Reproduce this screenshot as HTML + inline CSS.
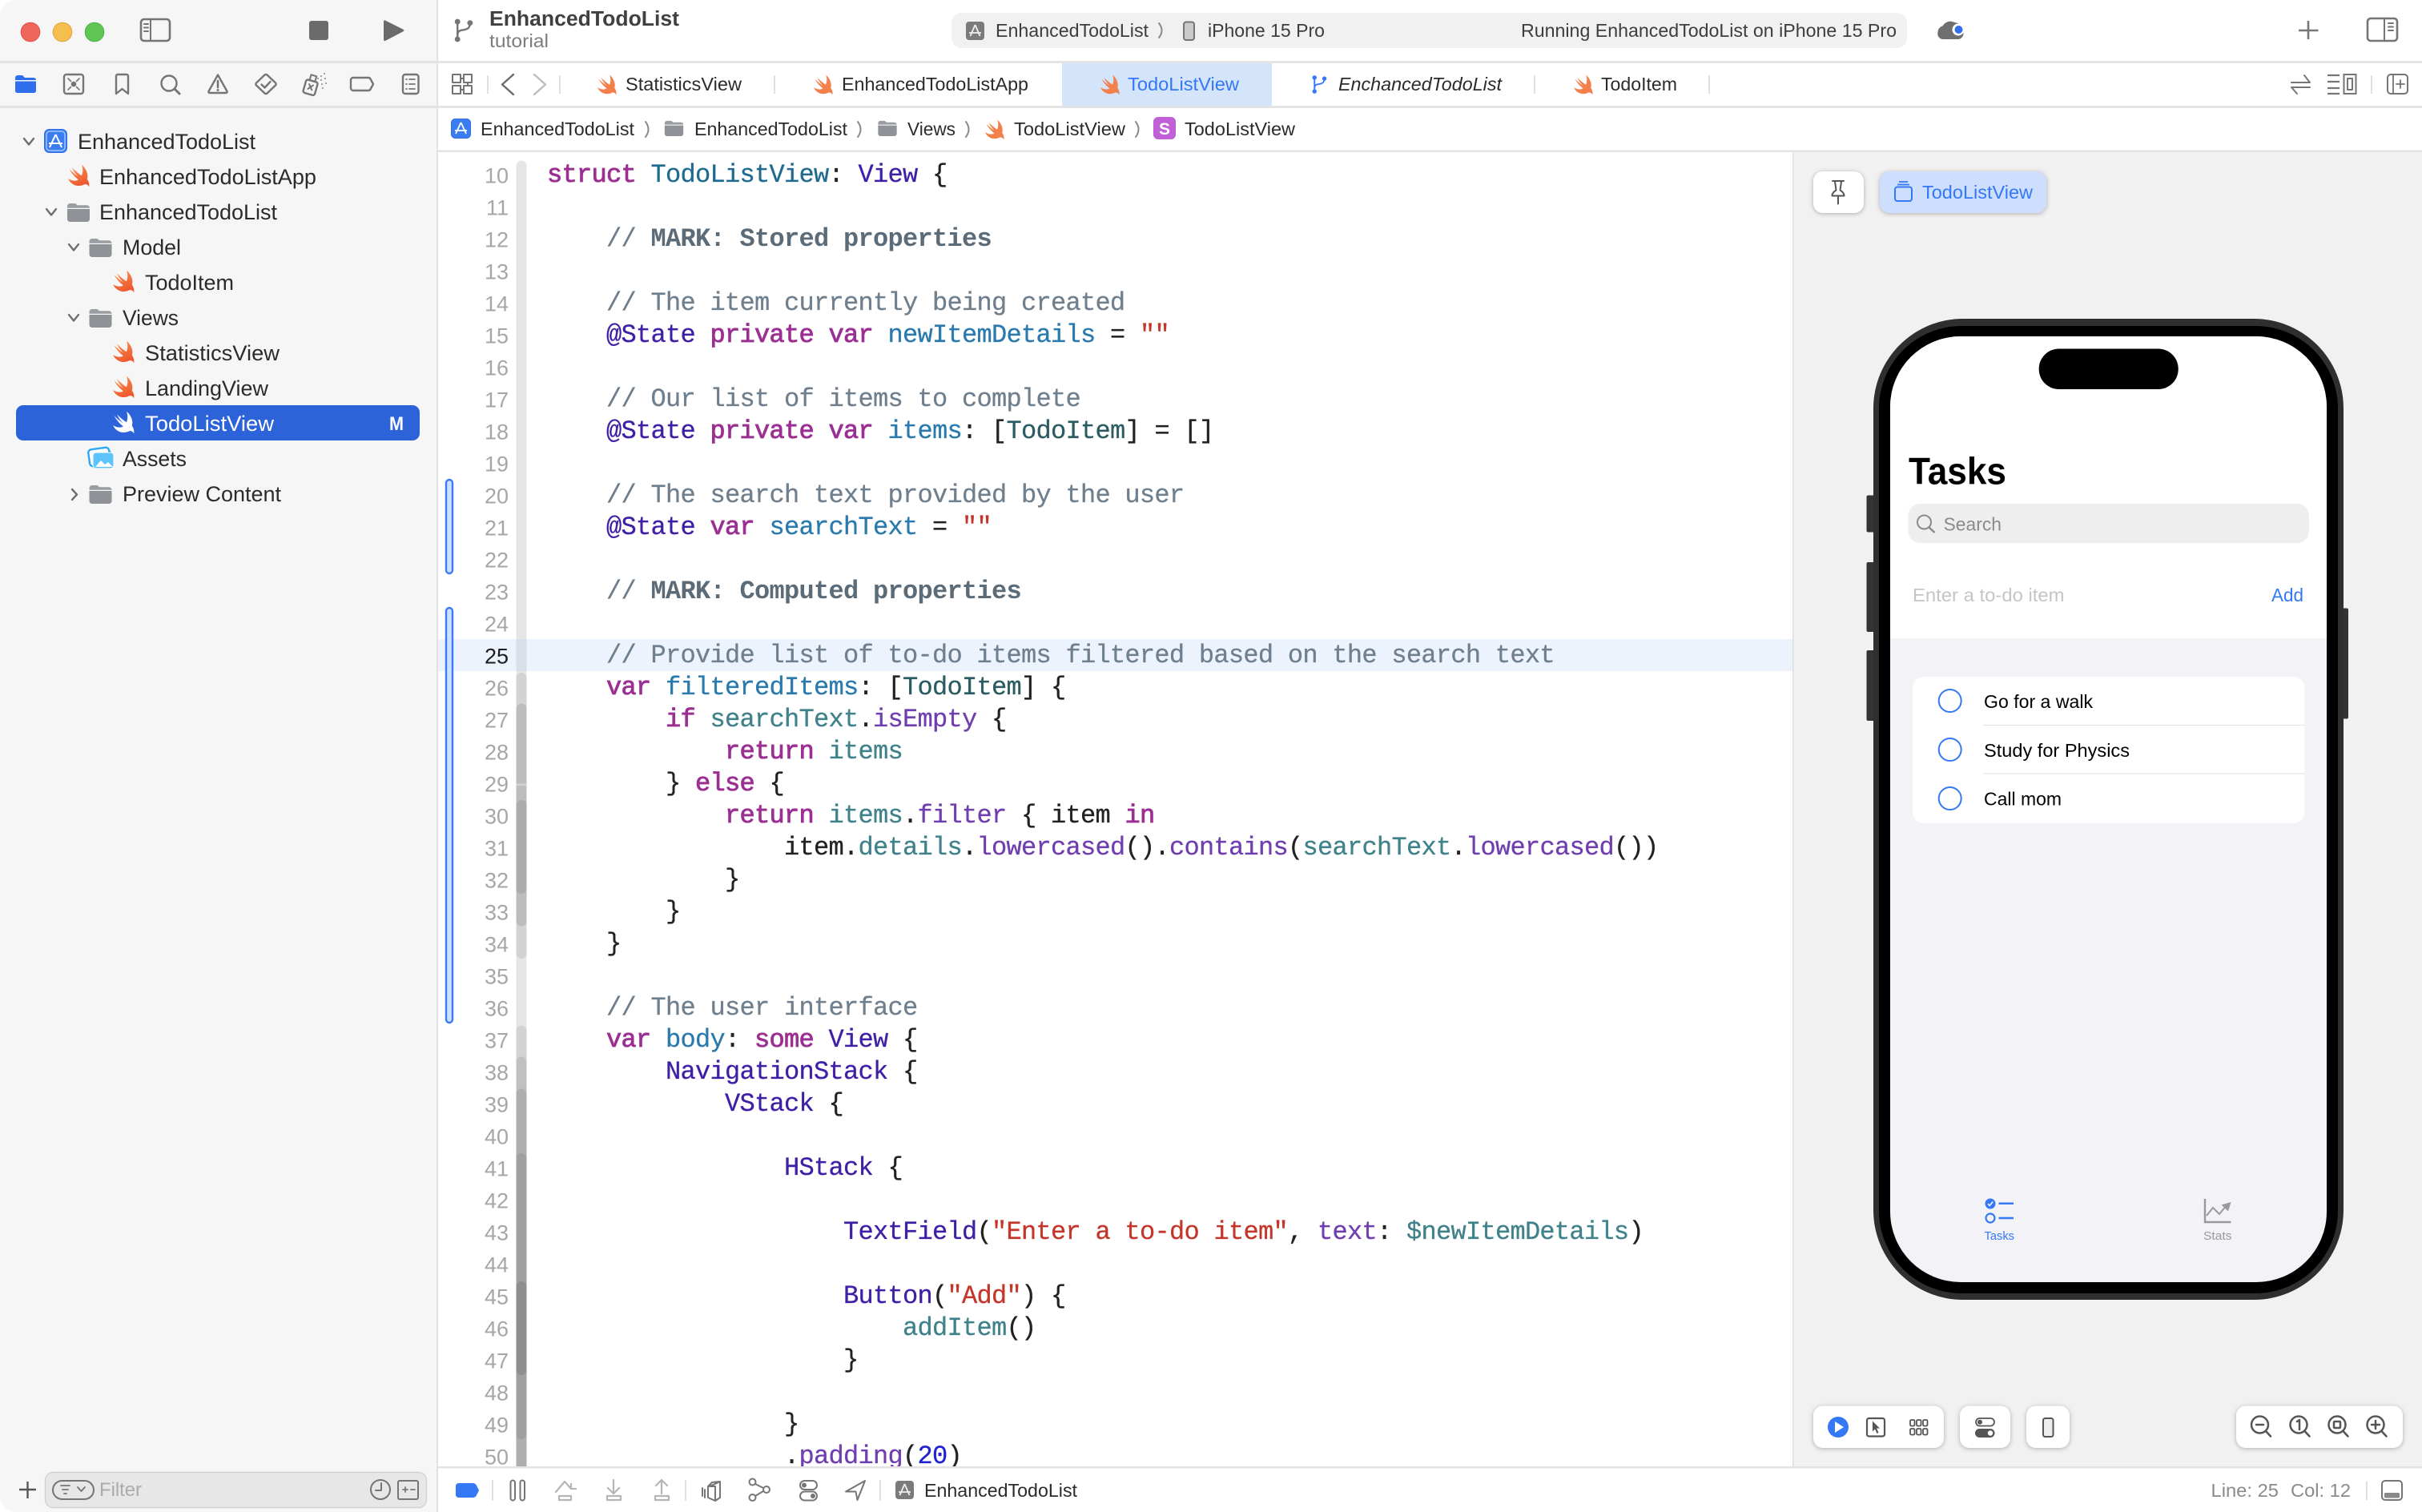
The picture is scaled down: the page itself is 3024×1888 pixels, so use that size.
<!DOCTYPE html>
<html><head><meta charset="utf-8"><title>Xcode</title>
<style>
html,body{margin:0;padding:0;background:#fff;width:3024px;height:1888px;overflow:hidden}
svg{display:block}
text{font-family:"Liberation Sans",sans-serif;white-space:pre}
.c text{font-family:"Liberation Mono",monospace;font-size:32px;letter-spacing:-.705px;fill:#222;stroke:#222;stroke-width:.3px;white-space:pre}
.k{fill:#9b2f92;stroke:#9b2f92;stroke-width:.8px}.t{fill:#6f7f8d;stroke:#6f7f8d}.m{fill:#5b6b78;stroke:#5b6b78;font-weight:bold;stroke-width:0}.d{fill:#1f6b90;stroke:#1f6b90}.v{fill:#2a7aad;stroke:#2a7aad}.s{fill:#3f1fa5;stroke:#3f1fa5}.p{fill:#2b5c62;stroke:#2b5c62}.r{fill:#40828a;stroke:#40828a}.f{fill:#6f3fb0;stroke:#6f3fb0}.q{fill:#c4352a;stroke:#c4352a}.n{fill:#2222d0;stroke:#2222d0}
.ln text{font-size:27px;fill:#a6a6a6;text-anchor:end}
.nav text,.ui{font-size:26.4px;fill:#2b2b2b}
.tb{font-size:23.5px;fill:#2b2b2b}
.ic{fill:none;stroke:#757575;stroke-width:2.4;stroke-linecap:round;stroke-linejoin:round}
.dk{fill:none;stroke:#555;stroke-width:2.5;stroke-linecap:round;stroke-linejoin:round}
.lt{fill:none;stroke:#b5b5b5;stroke-width:2.2;stroke-linecap:round;stroke-linejoin:round}
.sh{filter:drop-shadow(0 1px 3px rgba(0,0,0,.28))}
.ch{fill:none;stroke:#8a8a8a;stroke-width:2;stroke-linecap:round;stroke-linejoin:round}
.nc{fill:none;stroke:#6b6b6b;stroke-width:2.4;stroke-linecap:round;stroke-linejoin:round}
</style></head><body>
<svg xmlns="http://www.w3.org/2000/svg" width="3024" height="1888" viewBox="0 0 3024 1888">
<defs>
<linearGradient id="sg" x1="0" y1="0" x2="0.4" y2="1"><stop offset="0" stop-color="#f8934f"/><stop offset="1" stop-color="#ee5a2f"/></linearGradient>
<symbol id="swiftpath" viewBox="0 0 24 24"><path d="M15 .5C20 5 22 11 20.500 15.500C22 17.500 23 20 22.500 23.500C21.500 21.300 19.500 20.300 17.500 21C13 23.300 7.500 22.800 3.500 18.800C2.500 17.800 1.500 16.500 1 15C5 17.500 9 17.600 11.500 16C8 13.500 4.500 9.500 2 5C5 8 8.500 11 11.500 13C9 10.500 6.500 7 5 3.500C8 6.800 12 10 14.800 11.800C16.300 8.500 16.300 4.500 15 .5Z"/></symbol>
<symbol id="fold" viewBox="0 0 28 24"><path d="M0 4.500a3.500 3.500 0 0 1 3.500-3.500h6.500l2.500 2.300h12a3.500 3.500 0 0 1 3.500 3.200v.3H0Z" fill="#9a9da1"/><path d="M0 8h28v12.500a3.500 3.500 0 0 1-3.500 3.500H3.500A3.500 3.500 0 0 1 0 20.500Z" fill="#8f9297"/></symbol>
<symbol id="branch" viewBox="0 0 24 28"><path d="M5 4V24M5 20c0-7 5-6 9-7 4-1 6-3 6-8" fill="none" stroke="currentColor" stroke-width="2.300"/><circle cx="5" cy="3.500" r="3.300" fill="currentColor"/><circle cx="20" cy="5" r="3.300" fill="currentColor"/><circle cx="5" cy="24.500" r="3.300" fill="currentColor"/></symbol>
</defs>

<!-- sidebar -->
<path d="M22 0H546V1888H22Q0 1888 0 1866V22Q0 0 22 0Z" fill="#f6f6f6"/>
<rect x="545" y="0" width="2" height="1888" fill="#e2e2e2"/>
<rect x="0" y="76" width="3024" height="3" fill="#e3e3e3"/>
<rect x="0" y="132" width="3024" height="3" fill="#e3e3e3"/>

<!-- traffic lights -->
<circle cx="38" cy="40" r="11.800" fill="#f1665c" stroke="#dd5148" stroke-width="1"/>
<circle cx="78" cy="40" r="11.800" fill="#f6be4f" stroke="#dea53c" stroke-width="1"/>
<circle cx="118" cy="40" r="11.800" fill="#5fc655" stroke="#4eb045" stroke-width="1"/>
<rect x="176" y="24" width="36" height="27" rx="4" class="ic" style="stroke-width:2.600"/>
<path d="M188 24V51M180 30h5M180 34.500h5M180 39h5" class="ic" style="stroke-width:2"/>
<rect x="386" y="26" width="24" height="24" rx="3" fill="#6b6b6b"/>
<path d="M479 27Q479 24 482 26L503 36.500Q506 38 503 39.500L482 50.500Q479 52 479 49Z" fill="#6b6b6b"/>

<!-- nav selector -->
<path d="M19 97a3 3 0 0 1 3-3h6l3 3h11a3 3 0 0 1 3 3v0H19Z" fill="#2f6fed"/>
<path d="M19 101.500h26v12a2.500 2.500 0 0 1-2.500 2.500h-21a2.500 2.500 0 0 1-2.500-2.500Z" fill="#2f6fed"/>
<rect x="80" y="93" width="24" height="24" rx="3" class="ic"/>
<circle cx="92" cy="105" r="3.300" fill="#757575"/>
<path d="M85 98l3.500 3.500M99 98l-3.500 3.500M85 112l3.500-3.500M99 112l-3.500-3.500" class="ic" style="stroke-width:1.600"/>
<path d="M145 95a2 2 0 0 1 2-2h11a2 2 0 0 1 2 2v22l-7.500-6-7.500 6Z" class="ic"/>
<circle cx="211" cy="104" r="9.500" class="ic"/><path d="M218 111l6 6" class="ic" style="stroke-width:3"/>
<path d="M272 93.500L260.500 114a1.500 1.500 0 0 0 1.300 2h20.400a1.500 1.500 0 0 0 1.300-2Z" class="ic"/>
<path d="M272 101v8" class="ic" style="stroke-width:2.600"/><circle cx="272" cy="112.500" r="1.500" fill="#757575"/>
<path d="M330.500 93.500a2.500 2.500 0 0 1 3 0L344 103.500a2 2 0 0 1 0 3L333.500 116.500a2.500 2.500 0 0 1-3 0L320 106.500a2 2 0 0 1 0-3Z" class="ic"/>
<path d="M326.500 105.500l4 4 7-7.500" class="ic"/>
<g transform="rotate(16 389 106)"><rect x="381" y="101" width="15" height="17" rx="2.500" class="ic"/><rect x="385" y="94" width="7" height="7" class="ic" style="stroke-width:2"/><path d="M386 106l5 6M391 106l-5 6" class="ic" style="stroke-width:2"/></g>
<g fill="#8a8a8a"><circle cx="397" cy="98" r="1"/><circle cx="401" cy="95" r="1"/><circle cx="405" cy="92" r="1"/><circle cx="401" cy="100" r="1"/><circle cx="406" cy="98" r="1"/><circle cx="402" cy="105" r="1"/><circle cx="407" cy="104" r="1"/><circle cx="403" cy="110" r="1"/></g>
<path d="M441 97h19a3 3 0 0 1 2.500 1.500L466 105l-3.500 6.500a3 3 0 0 1-2.500 1.500h-19a3 3 0 0 1-3-3V100a3 3 0 0 1 3-3Z" class="ic"/>
<rect x="503" y="93" width="19.500" height="24" rx="3" class="ic"/>
<path d="M507 99h1M511 99h7M507 105h1M511 105h7M507 111h1M511 111h7" class="ic" style="stroke-width:1.800"/>

<!-- navigator tree -->
<rect x="20" y="506" width="504" height="44" rx="9" fill="#2c63d9"/>
<g class="ch" style="stroke:#6e6e6e;stroke-width:2.400;fill:none">
<path d="M30 173l6 7.500 6-7.500"/><path d="M58 261l6 7.500 6-7.500"/><path d="M86 305l6 7.500 6-7.500"/><path d="M86 393l6 7.500 6-7.500"/><path d="M90 611l6 6.500-6 6.500"/>
</g>
<rect x="55.500" y="161.500" width="28" height="29" rx="6" fill="#3a7cf2" stroke="#2d6fe8" stroke-width="1"/>
<rect x="58" y="164" width="23" height="24" rx="4" fill="none" stroke="#bcd4fb" stroke-width="1.200"/>
<path d="M69.500 168L62 184M69.500 168L77 184M61 179h17" stroke="#fff" stroke-width="2" fill="none"/>
<g fill="url(#sg)">
<use href="#swiftpath" x="84" y="205" width="29" height="29"/>
<use href="#swiftpath" x="140" y="337" width="29" height="29"/>
<use href="#swiftpath" x="140" y="425" width="29" height="29"/>
<use href="#swiftpath" x="140" y="469" width="29" height="29"/>
</g>
<use href="#swiftpath" x="140" y="513" width="29" height="29" fill="#fff"/>
<use href="#fold" x="84" y="253" width="28" height="24"/>
<use href="#fold" x="111" y="297" width="29" height="24"/>
<use href="#fold" x="111" y="385" width="29" height="24"/>
<use href="#fold" x="111" y="605" width="29" height="24"/>
<rect x="114" y="563" width="26" height="21" rx="4" fill="#2ba6f4" transform="rotate(-8 127 573)"/>
<rect x="111" y="560" width="26" height="21" rx="4" fill="#fff" stroke="#2ba6f4" stroke-width="2.400" transform="rotate(-8 124 570)"/>
<rect x="116" y="565" width="26" height="20" rx="4" fill="#5cc3fb" stroke="#fff" stroke-width="1"/>
<path d="M119 583l7-8 5 5 4-3 6 6Z" fill="#fff"/>
<g class="nav">
<text x="97" y="186" textLength="222" lengthAdjust="spacingAndGlyphs">EnhancedTodoList</text>
<text x="124" y="230" textLength="271" lengthAdjust="spacingAndGlyphs">EnhancedTodoListApp</text>
<text x="124" y="274" textLength="222" lengthAdjust="spacingAndGlyphs">EnhancedTodoList</text>
<text x="153" y="318" textLength="73" lengthAdjust="spacingAndGlyphs">Model</text>
<text x="181" y="362" textLength="111" lengthAdjust="spacingAndGlyphs">TodoItem</text>
<text x="153" y="406" textLength="70" lengthAdjust="spacingAndGlyphs">Views</text>
<text x="181" y="450" textLength="168" lengthAdjust="spacingAndGlyphs">StatisticsView</text>
<text x="181" y="494" textLength="154" lengthAdjust="spacingAndGlyphs">LandingView</text>
<text x="181" y="538" textLength="161" lengthAdjust="spacingAndGlyphs" style="fill:#fff">TodoListView</text>
<text x="486" y="537" textLength="18" lengthAdjust="spacingAndGlyphs" style="fill:#fff;font-weight:bold;font-size:24px">M</text>
<text x="153" y="582" textLength="80" lengthAdjust="spacingAndGlyphs">Assets</text>
<text x="153" y="626" textLength="198" lengthAdjust="spacingAndGlyphs">Preview Content</text>
</g>

<!-- sidebar filter -->
<path d="M24 1860h21M34.500 1850v21" stroke="#555" stroke-width="2.400" fill="none"/>
<rect x="56.500" y="1838.500" width="476" height="44" rx="10" fill="#e7e7e7" stroke="#d2d2d2" stroke-width="1.400"/>
<rect x="66" y="1849" width="51" height="23" rx="11.500" class="ic" style="stroke-width:2"/>
<path d="M76 1855h11M78 1860h7M80 1865h3M97 1857l4.500 5 4.500-5" class="ic" style="stroke-width:1.800"/>
<text x="124" y="1868" font-size="24" fill="#ababab" textLength="53" lengthAdjust="spacingAndGlyphs">Filter</text>
<circle cx="475" cy="1860" r="12" class="ic" style="stroke-width:2"/><path d="M476 1852v9h-7" class="ic" style="stroke-width:2"/>
<rect x="497" y="1849" width="25" height="23" rx="2" class="ic" style="stroke-width:2"/>
<path d="M503 1860h6M506 1857v6M513 1860h5" class="ic" style="stroke-width:1.800"/>

<!-- toolbar -->
<use href="#branch" x="566" y="23" width="25" height="30" color="#757575"/>
<text x="611" y="32" font-size="26.300" font-weight="bold" fill="#404040" textLength="237" lengthAdjust="spacingAndGlyphs">EnhancedTodoList</text>
<text x="611" y="59" font-size="23" fill="#7d7d7d" textLength="74" lengthAdjust="spacingAndGlyphs">tutorial</text>

<rect x="1188" y="16" width="1193" height="44" rx="13" fill="#f1f1f1"/>
<rect x="1206" y="27" width="23" height="23" rx="4" fill="#7b7b7b"/>
<path d="M1217.500 31L1211.500 45M1217.500 31L1223.500 45M1210 41h15" stroke="#eee" stroke-width="1.800" fill="none"/>
<text x="1243" y="46" class="tb" style="fill:#3d3d3d" textLength="191" lengthAdjust="spacingAndGlyphs">EnhancedTodoList</text>
<path d="M1447 29q7 9 0 18" class="ch"/>
<rect x="1478" y="27.500" width="13" height="22.500" rx="3" fill="#c9c9c9" stroke="#757575" stroke-width="2"/>
<text x="1508" y="46" class="tb" style="fill:#3d3d3d" textLength="146" lengthAdjust="spacingAndGlyphs">iPhone 15 Pro</text>
<text x="1899" y="46" class="tb" style="fill:#3d3d3d" textLength="469" lengthAdjust="spacingAndGlyphs">Running EnhancedTodoList on iPhone 15 Pro</text>
<path d="M2426 49a7 7 0 0 1-6.500-9 8 8 0 0 1 6-7.500 11 11 0 0 1 15-4.500 12 12 0 0 1 11 13 7.500 7.500 0 0 1-6 8Z" fill="#6f6f6f"/>
<circle cx="2445" cy="37" r="7.500" fill="#fff"/><circle cx="2445.500" cy="37" r="5" fill="#2f6fed"/>
<path d="M2870 38h24.500M2882 26v23" stroke="#777" stroke-width="2.600" fill="none"/>
<rect x="2956" y="23" width="37" height="28" rx="4" class="ic" style="stroke-width:2.600"/>
<path d="M2977 23v28M2982 29h6M2982 33.500h6M2982 38h6" class="ic" style="stroke-width:2"/>

<!-- tab bar -->
<g class="ic" style="stroke-width:2">
<rect x="565" y="93" width="10" height="10"/><rect x="579" y="93" width="10" height="10"/><rect x="565" y="107" width="10" height="10"/><rect x="579" y="107" width="10" height="10"/>
<path d="M575 98h4M575 112h4M584 103v4"/>
</g>
<path d="M609 94v23M699 94v23M967 94v23M1916 94v23M2134 94v23M2961 94v23" stroke="#dedede" stroke-width="1.800" fill="none"/>
<path d="M641 93l-14 12.500 14 12.500" class="nc"/>
<path d="M667 93l14 12.500-14 12.500" class="nc" style="stroke:#bdbdbd"/>
<rect x="1326" y="78.500" width="262" height="53.500" fill="#d3e4fb"/>
<g fill="#f37f4b">
<use href="#swiftpath" x="745" y="93" width="26" height="26"/>
<use href="#swiftpath" x="1015" y="93" width="26" height="26"/>
<use href="#swiftpath" x="1373" y="93" width="26" height="26"/>
<use href="#swiftpath" x="1964" y="93" width="26" height="26"/>
</g>
<text x="781" y="113" class="tb" textLength="145" lengthAdjust="spacingAndGlyphs">StatisticsView</text>
<text x="1051" y="113" class="tb" textLength="233" lengthAdjust="spacingAndGlyphs">EnhancedTodoListApp</text>
<text x="1408" y="113" class="tb" style="fill:#3478f6" textLength="139" lengthAdjust="spacingAndGlyphs">TodoListView</text>
<use href="#branch" x="1636" y="94" width="22" height="23" color="#3478f6"/>
<text x="1671" y="113" class="tb" font-style="italic" textLength="204" lengthAdjust="spacingAndGlyphs">EnchancedTodoList</text>
<text x="1999" y="113" class="tb" textLength="95" lengthAdjust="spacingAndGlyphs">TodoItem</text>
<path d="M2861 103h23l-7-9M2884 109h-23l7 8" class="ic" style="stroke-width:2"/>
<path d="M2906 94h15M2906 102h15M2906 110h15M2906 117h15" class="ic" style="stroke-width:2.200;stroke-linecap:butt"/>
<rect x="2926.500" y="93" width="15" height="24" class="ic" style="stroke-linejoin:miter;stroke-width:2"/><rect x="2931" y="98" width="6" height="14" class="ic" style="stroke-width:2"/>
<rect x="2981" y="93" width="25" height="24" rx="4" class="ic" style="stroke-width:2"/>
<path d="M2988 93v24M2992 105h10M2997 100v10" class="ic" style="stroke-width:1.800"/>

<!-- jump bar -->
<rect x="563.500" y="148.500" width="24" height="24" rx="5" fill="#3a7cf2" stroke="#2d6fe8"/>
<path d="M575.500 153L569 167M575.500 153L582 167M568 163h15" stroke="#fff" stroke-width="1.800" fill="none"/>
<text x="600" y="169" class="tb" textLength="192" lengthAdjust="spacingAndGlyphs">EnhancedTodoList</text>
<path d="M806 152q7 9.500 0 19" class="ch"/>
<use href="#fold" x="829" y="150" width="25" height="20"/>
<text x="867" y="169" class="tb" textLength="191" lengthAdjust="spacingAndGlyphs">EnhancedTodoList</text>
<path d="M1071 152q7 9.500 0 19" class="ch"/>
<use href="#fold" x="1096" y="150" width="24" height="20"/>
<text x="1133" y="169" class="tb" textLength="60" lengthAdjust="spacingAndGlyphs">Views</text>
<path d="M1206 152q7 9.500 0 19" class="ch"/>
<use href="#swiftpath" x="1229" y="149" width="26" height="26" fill="#f37f4b"/>
<text x="1266" y="169" class="tb" textLength="139" lengthAdjust="spacingAndGlyphs">TodoListView</text>
<path d="M1418 152q7 9.500 0 19" class="ch"/>
<rect x="1440" y="146" width="28" height="28" rx="6" fill="#c05fd6"/>
<text x="1454" y="168" font-size="21" font-weight="bold" fill="#fff" text-anchor="middle">S</text>
<text x="1479" y="169" class="tb" textLength="138" lengthAdjust="spacingAndGlyphs">TodoListView</text>
<rect x="547" y="187.500" width="2477" height="2.500" fill="#e3e3e3"/>

<!-- editor -->
<rect x="547" y="798" width="1692" height="40" fill="#edf3fd"/>
<path d="M644.500 1832V207a6.500 6.500 0 0 1 13 0V1832Z" fill="#e6e6e6"/>
<rect x="644.500" y="798" width="13" height="40" fill="#d8dfe9"/>
<rect x="644.500" y="840" width="13" height="357" rx="6.500" fill="#d3d3d3"/>
<path d="M644.500 978.500V885a6.500 6.500 0 0 1 13 0V978.500Z" fill="#bdbdbd"/>
<path d="M644.500 981H657.500V1150a6.500 6.500 0 0 1-13 0Z" fill="#bdbdbd"/>
<rect x="644.500" y="999" width="13" height="117" rx="6.500" fill="#acacac"/>
<path d="M644.500 1832V1287a6.500 6.500 0 0 1 13 0V1832Z" fill="#d3d3d3"/>
<path d="M644.500 1832V1326a6.500 6.500 0 0 1 13 0V1832Z" fill="#c0c0c0"/>
<path d="M644.500 1832V1366a6.500 6.500 0 0 1 13 0V1832Z" fill="#aeaeae"/>
<rect x="644.500" y="1440" width="13" height="357" rx="6.500" fill="#a0a0a0"/>
<rect x="644.500" y="1600" width="13" height="117" rx="6.500" fill="#8e8e8e"/>
<rect x="557" y="599" width="8" height="117" rx="4" fill="#cfe0ff" stroke="#3b7bf6" stroke-width="2.400"/>
<rect x="557" y="759" width="8" height="518" rx="4" fill="#cfe0ff" stroke="#3b7bf6" stroke-width="2.400"/>

<g class="ln" transform="translate(0,-1)">
<text x="635" y="229.500">10</text><text x="635" y="269.500">11</text><text x="635" y="309.500">12</text><text x="635" y="349.500">13</text><text x="635" y="389.500">14</text><text x="635" y="429.500">15</text><text x="635" y="469.500">16</text><text x="635" y="509.500">17</text><text x="635" y="549.500">18</text><text x="635" y="589.500">19</text><text x="635" y="629.500">20</text><text x="635" y="669.500">21</text><text x="635" y="709.500">22</text><text x="635" y="749.500">23</text><text x="635" y="789.500">24</text><text x="635" y="829.500" style="fill:#1d1d1d">25</text><text x="635" y="869.500">26</text><text x="635" y="909.500">27</text><text x="635" y="949.500">28</text><text x="635" y="989.500">29</text><text x="635" y="1029.500">30</text><text x="635" y="1069.500">31</text><text x="635" y="1109.500">32</text><text x="635" y="1149.500">33</text><text x="635" y="1189.500">34</text><text x="635" y="1229.500">35</text><text x="635" y="1269.500">36</text><text x="635" y="1309.500">37</text><text x="635" y="1349.500">38</text><text x="635" y="1389.500">39</text><text x="635" y="1429.500">40</text><text x="635" y="1469.500">41</text><text x="635" y="1509.500">42</text><text x="635" y="1549.500">43</text><text x="635" y="1589.500">44</text><text x="635" y="1629.500">45</text><text x="635" y="1669.500">46</text><text x="635" y="1709.500">47</text><text x="635" y="1749.500">48</text><text x="635" y="1789.500">49</text><text x="635" y="1829.500">50</text>
</g>

<g class="c" transform="translate(2,-1)">
<text x="681" y="228"><tspan class="k">struct</tspan> <tspan class="d">TodoListView</tspan>: <tspan class="s">View</tspan> {</text>
<text x="755" y="308"><tspan class="t">// </tspan><tspan class="m">MARK: Stored properties</tspan></text>
<text x="755" y="388"><tspan class="t">// The item currently being created</tspan></text>
<text x="755" y="428"><tspan class="s">@State</tspan> <tspan class="k">private</tspan> <tspan class="k">var</tspan> <tspan class="v">newItemDetails</tspan> = <tspan class="q">""</tspan></text>
<text x="755" y="508"><tspan class="t">// Our list of items to complete</tspan></text>
<text x="755" y="548"><tspan class="s">@State</tspan> <tspan class="k">private</tspan> <tspan class="k">var</tspan> <tspan class="v">items</tspan>: [<tspan class="p">TodoItem</tspan>] = []</text>
<text x="755" y="628"><tspan class="t">// The search text provided by the user</tspan></text>
<text x="755" y="668"><tspan class="s">@State</tspan> <tspan class="k">var</tspan> <tspan class="v">searchText</tspan> = <tspan class="q">""</tspan></text>
<text x="755" y="748"><tspan class="t">// </tspan><tspan class="m">MARK: Computed properties</tspan></text>
<text x="755" y="828"><tspan class="t">// Provide list of to-do items filtered based on the search text</tspan></text>
<text x="755" y="868"><tspan class="k">var</tspan> <tspan class="v">filteredItems</tspan>: [<tspan class="p">TodoItem</tspan>] {</text>
<text x="829" y="908"><tspan class="k">if</tspan> <tspan class="r">searchText</tspan>.<tspan class="f">isEmpty</tspan> {</text>
<text x="903" y="948"><tspan class="k">return</tspan> <tspan class="r">items</tspan></text>
<text x="829" y="988">} <tspan class="k">else</tspan> {</text>
<text x="903" y="1028"><tspan class="k">return</tspan> <tspan class="r">items</tspan>.<tspan class="f">filter</tspan> { item <tspan class="k">in</tspan></text>
<text x="977" y="1068">item.<tspan class="r">details</tspan>.<tspan class="f">lowercased</tspan>().<tspan class="f">contains</tspan>(<tspan class="r">searchText</tspan>.<tspan class="f">lowercased</tspan>())</text>
<text x="903" y="1108">}</text>
<text x="829" y="1148">}</text>
<text x="755" y="1188">}</text>
<text x="755" y="1268"><tspan class="t">// The user interface</tspan></text>
<text x="755" y="1308"><tspan class="k">var</tspan> <tspan class="v">body</tspan>: <tspan class="k">some</tspan> <tspan class="s">View</tspan> {</text>
<text x="829" y="1348"><tspan class="s">NavigationStack</tspan> {</text>
<text x="903" y="1388"><tspan class="s">VStack</tspan> {</text>
<text x="977" y="1468"><tspan class="s">HStack</tspan> {</text>
<text x="1051" y="1548"><tspan class="s">TextField</tspan>(<tspan class="q">"Enter a to-do item"</tspan>, <tspan class="f">text</tspan>: <tspan class="r">$newItemDetails</tspan>)</text>
<text x="1051" y="1628"><tspan class="s">Button</tspan>(<tspan class="q">"Add"</tspan>) {</text>
<text x="1125" y="1668"><tspan class="r">addItem</tspan>()</text>
<text x="1051" y="1708">}</text>
<text x="977" y="1788">}</text>
<text x="977" y="1828">.<tspan class="f">padding</tspan>(<tspan class="n">20</tspan>)</text>
</g>

<!-- preview pane -->
<rect x="2239" y="190" width="785" height="1642" fill="#f1f1f1"/>
<rect x="2238" y="190" width="1.500" height="1642" fill="#dedede"/>
<g class="sh">
<rect x="2264" y="214" width="63" height="52" rx="12" fill="#fff"/>
<rect x="2347" y="214" width="208" height="52" rx="12" fill="#cddffc"/>
</g>
<path d="M2288 226h14M2291 226.500l1.500 11q-5 3-5 7h15q0-4-5-7l1.500-11M2295 244.500v10" class="dk" style="stroke-width:2"/>
<rect x="2366" y="233.500" width="21" height="17.500" rx="3" fill="none" stroke="#3478f6" stroke-width="2"/>
<path d="M2369 230.500h15M2371 227h11" stroke="#3478f6" stroke-width="1.800" fill="none"/>
<text x="2400" y="248" class="tb" style="fill:#3478f6" textLength="138" lengthAdjust="spacingAndGlyphs">TodoListView</text>

<!-- phone -->
<g fill="#333">
<rect x="2330.500" y="618.500" width="12" height="46" rx="2"/>
<rect x="2330.500" y="702" width="12" height="87" rx="2"/>
<rect x="2330.500" y="812" width="12" height="88" rx="2"/>
<rect x="2922" y="759.500" width="10" height="138" rx="2"/>
</g>
<rect x="2339" y="398" width="587" height="1225" rx="112" fill="#2f2f2f"/>
<rect x="2346" y="407" width="573" height="1208" rx="103" fill="#000"/>
<rect x="2360" y="420" width="545" height="1181" rx="88" fill="#f2f2f7"/>
<path d="M2360 797V508a88 88 0 0 1 88-88H2817a88 88 0 0 1 88 88V797Z" fill="#fff"/>
<rect x="2545.700" y="435.500" width="174" height="50.500" rx="25" fill="#000"/>
<text x="2383" y="604.500" font-size="47" font-weight="bold" fill="#000" textLength="122" lengthAdjust="spacingAndGlyphs">Tasks</text>
<rect x="2382.500" y="629" width="500.500" height="49" rx="15" fill="#eeeeef"/>
<circle cx="2402.500" cy="652" r="8.500" fill="none" stroke="#8a8a8e" stroke-width="2"/><path d="M2408.500 658.500l7 6.500" stroke="#8a8a8e" stroke-width="2.400" fill="none"/>
<text x="2426.500" y="662.500" font-size="23" fill="#8a8a8e" textLength="72.500" lengthAdjust="spacingAndGlyphs">Search</text>
<text x="2388" y="751" font-size="23" fill="#c5c5c7" textLength="189.500" lengthAdjust="spacingAndGlyphs">Enter a to-do item</text>
<text x="2836" y="751" font-size="23" fill="#3478f6" textLength="40" lengthAdjust="spacingAndGlyphs">Add</text>
<rect x="2388" y="845" width="489.500" height="183" rx="14" fill="#fff"/>
<path d="M2476 905.500H2877.500M2476 966H2877.500" stroke="#e5e5ea" stroke-width="1.300"/>
<circle cx="2434.700" cy="875" r="14" fill="none" stroke="#3478f6" stroke-width="2"/>
<circle cx="2434.700" cy="936" r="14" fill="none" stroke="#3478f6" stroke-width="2"/>
<circle cx="2434.700" cy="997" r="14" fill="none" stroke="#3478f6" stroke-width="2"/>
<text x="2477" y="884" font-size="23" fill="#000" textLength="136" lengthAdjust="spacingAndGlyphs">Go for a walk</text>
<text x="2477" y="945" font-size="23" fill="#000" textLength="182" lengthAdjust="spacingAndGlyphs">Study for Physics</text>
<text x="2477" y="1005.500" font-size="23" fill="#000" textLength="97" lengthAdjust="spacingAndGlyphs">Call mom</text>
<circle cx="2485" cy="1503" r="6.500" fill="#3478f6"/>
<path d="M2482 1503l2.200 2.500 4-5" stroke="#fff" stroke-width="1.500" fill="none"/>
<circle cx="2485" cy="1521" r="5.500" fill="none" stroke="#3478f6" stroke-width="2.200"/>
<path d="M2495.500 1502.700h18.500M2495.500 1521h18.500" stroke="#3478f6" stroke-width="2.500" fill="none"/>
<text x="2477.500" y="1548" font-size="15" fill="#3478f6" textLength="37.500" lengthAdjust="spacingAndGlyphs">Tasks</text>
<path d="M2753 1497v29h32.500" fill="none" stroke="#98989d" stroke-width="2.400"/>
<path d="M2755 1518l8-10 8 8 9-11" fill="none" stroke="#98989d" stroke-width="2"/>
<path d="M2785.500 1501l-12 3.500 8.500 8Z" fill="#98989d"/>
<text x="2751" y="1548" font-size="15" fill="#98989d" textLength="35.500" lengthAdjust="spacingAndGlyphs">Stats</text>

<!-- preview bottom toolbar -->
<g class="sh" fill="#fff">
<rect x="2264" y="1755.500" width="163" height="52.500" rx="12"/>
<rect x="2447" y="1755.500" width="63" height="52.500" rx="12"/>
<rect x="2530" y="1755.500" width="54" height="52.500" rx="12"/>
<rect x="2792" y="1755.500" width="208" height="52.500" rx="12"/>
</g>
<circle cx="2295" cy="1782" r="13" fill="#3478f6"/><path d="M2291 1775l11 7-11 7Z" fill="#fff"/>
<rect x="2331" y="1771" width="22" height="22.500" rx="2.500" class="dk" style="stroke-width:2.200"/>
<path d="M2338 1774.500v13l3-3 2.500 5.500 2-1-2.500-5.500 4 0Z" fill="#555"/>
<g class="dk" style="stroke-width:1.800">
<rect x="2385" y="1773" width="5.500" height="7.500" rx="1.500"/><rect x="2393" y="1773" width="5.500" height="7.500" rx="1.500"/><rect x="2401" y="1773" width="5.500" height="7.500" rx="1.500"/>
<rect x="2385" y="1784" width="5.500" height="7.500" rx="1.500"/><rect x="2393" y="1784" width="5.500" height="7.500" rx="1.500"/><rect x="2401" y="1784" width="5.500" height="7.500" rx="1.500"/>
</g>
<rect x="2467" y="1771" width="23" height="9.500" rx="4.750" class="dk" style="stroke-width:1.800"/><circle cx="2472" cy="1775.700" r="3" fill="#555"/>
<rect x="2466" y="1784" width="24.500" height="11" rx="5.500" fill="#555"/><circle cx="2485" cy="1789.500" r="3.200" fill="#fff"/>
<rect x="2551" y="1771" width="12.500" height="23" rx="2.500" fill="#eee" stroke="#555" stroke-width="2"/>
<g class="dk">
<circle cx="2821.500" cy="1779" r="10.500"/><path d="M2829 1787l6 6.500M2817 1779h9"/>
<circle cx="2870" cy="1779" r="10.500"/><path d="M2877.500 1787l6 6.500M2868 1775l3-2v12"/>
<circle cx="2918" cy="1779" r="10.500"/><path d="M2925.500 1787l6 6.500"/><rect x="2914" y="1775" width="8" height="8" rx="1"/>
<circle cx="2966" cy="1779" r="10.500"/><path d="M2973.500 1787l6 6.500M2961 1779h10M2966 1774v10"/>
</g>

<!-- status bar -->
<rect x="547" y="1832" width="2477" height="56" fill="#fff"/>
<rect x="547" y="1831" width="2477" height="2.500" fill="#e3e3e3"/>
<path d="M573 1852h17q3 0 4.500 2l3.500 7-3.500 7q-1.500 2-4.500 2h-17q-4 0-4-4v-10q0-4 4-4Z" fill="#3478f6"/>
<path d="M615 1848v26M856 1848v26M1099 1848v26M2955 1850v23" stroke="#dedede" stroke-width="1.800" fill="none"/>
<rect x="637.500" y="1848.500" width="5.500" height="25" rx="2.700" class="ic" style="stroke-width:2"/>
<rect x="649.500" y="1848.500" width="5.500" height="25" rx="2.700" class="ic" style="stroke-width:2"/>
<g class="lt">
<path d="M694 1863l11-13 8 9M713 1859v-6M713 1859h6"/><rect x="698" y="1868" width="15" height="5"/>
<path d="M766 1848v16M759 1858l7 7 7-7"/><rect x="758" y="1868" width="17" height="5"/>
<path d="M826 1865v-16M819 1855l7-7 7 7"/><rect x="818" y="1868" width="17" height="5"/>
</g>
<g class="ic" style="stroke-width:2">
<path d="M886 1856l13-6v20l-6 4-9-4v-14l5-5 10-1"/><path d="M893 1856v18M886 1856l7 0M880 1860v10M877 1858v10"/>
<circle cx="939.500" cy="1850.500" r="4"/><circle cx="957" cy="1860" r="4"/><circle cx="939.500" cy="1870" r="4"/>
<path d="M943 1853l10 5M953 1862l-10 6"/>
<rect x="999" y="1849" width="21" height="11" rx="5.500"/><circle cx="1004" cy="1854.500" r="2" fill="#757575"/>
<rect x="999" y="1862.500" width="21" height="11" rx="5.500"/><circle cx="1015" cy="1868" r="2" fill="#757575"/>
<path d="M1080 1849l-24 13.500h12.500l2 10.500Z"/>
</g>
<rect x="1118" y="1849" width="23" height="23" rx="4" fill="#7b7b7b"/>
<path d="M1129.500 1853L1123.500 1867M1129.500 1853L1135.500 1867M1122 1863h15" stroke="#eee" stroke-width="1.800" fill="none"/>
<text x="1154" y="1869" class="tb" textLength="191" lengthAdjust="spacingAndGlyphs">EnhancedTodoList</text>
<text x="2760.500" y="1869" font-size="23" fill="#8a8a8a" textLength="84.500" lengthAdjust="spacingAndGlyphs">Line: 25</text>
<text x="2860" y="1869" font-size="23" fill="#8a8a8a" textLength="75" lengthAdjust="spacingAndGlyphs">Col: 12</text>
<rect x="2974" y="1849" width="25" height="24" rx="4" class="ic" style="stroke-width:2"/>
<rect x="2977" y="1864" width="19" height="6.500" rx="1.500" fill="#8a8a8a"/>
</svg>
</body></html>
